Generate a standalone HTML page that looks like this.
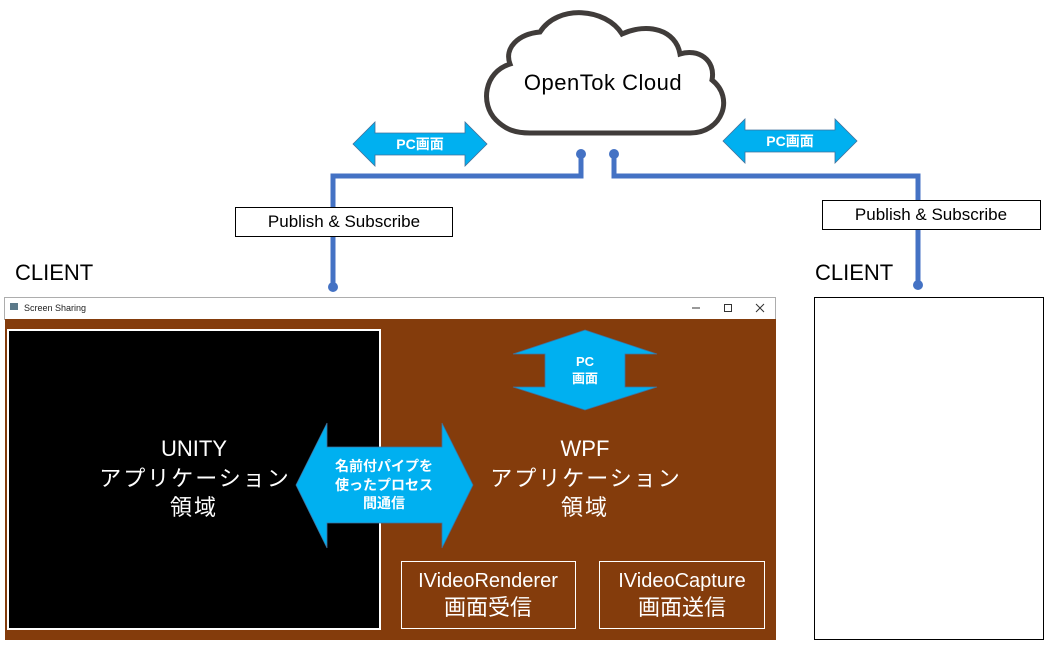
<!DOCTYPE html>
<html><head><meta charset="utf-8"><style>
html,body{margin:0;padding:0;background:#fff;width:1052px;height:645px;overflow:hidden}
text{font-family:"Liberation Sans","Noto Sans CJK JP",sans-serif}
</style></head><body>
<svg width="1052" height="645" viewBox="0 0 1052 645" xmlns="http://www.w3.org/2000/svg">
<path d="M530,133 L690,133 C722,133 735,98 712,80 C716,60 698,48 680,54 C676,30 648,22 622,34 C606,8 558,4 540,32 C518,34 504,48 510,64 C484,72 480,104 496,120 C506,130 516,133 530,133 Z" fill="#fff" stroke="#403c3a" stroke-width="5"/>
<text x="603" y="90" font-size="22" text-anchor="middle" fill="#000" letter-spacing="0.5">OpenTok Cloud</text>
<polygon points="353,144 375,122 375,133 465,133 465,122 487,144 465,166 465,155 375,155 375,166" fill="#00b0f0" stroke="#41719c" stroke-width="0.8"/>
<text x="420" y="149" font-size="14" font-weight="bold" fill="#fff" text-anchor="middle">PC画面</text>
<polygon points="723,141 745,119 745,130 835,130 835,119 857,141 835,163 835,152 745,152 745,163" fill="#00b0f0" stroke="#41719c" stroke-width="0.8"/>
<text x="790" y="146" font-size="14" font-weight="bold" fill="#fff" text-anchor="middle">PC画面</text>
<g stroke="#4472c4" stroke-width="5" fill="none">
<polyline points="581,155 581,176 333,176 333,287"/>
<polyline points="614,155 614,176 918,176 918,285"/>
</g>
<g fill="#4472c4">
<circle cx="581" cy="154" r="5"/><circle cx="614" cy="154" r="5"/>
<circle cx="333" cy="287" r="5"/><circle cx="918" cy="285" r="5"/>
</g>
<rect x="235.5" y="207.5" width="217" height="29" fill="#fff" stroke="#000"/>
<text x="344" y="227" font-size="17" text-anchor="middle">Publish &amp; Subscribe</text>
<rect x="822.5" y="200.5" width="218" height="29" fill="#fff" stroke="#000"/>
<text x="931" y="220" font-size="17" text-anchor="middle">Publish &amp; Subscribe</text>
<text x="15" y="280" font-size="22">CLIENT</text>
<text x="815" y="280" font-size="22">CLIENT</text>
<rect x="4.5" y="297.5" width="771" height="22" fill="#fff" stroke="#999" stroke-width="0.8"/>
<rect x="10" y="303" width="8" height="7" fill="#5c7a8a"/>
<text x="24" y="311" font-size="9" fill="#222">Screen Sharing</text>
<line x1="692" y1="308" x2="700" y2="308" stroke="#333"/>
<rect x="724.5" y="304.5" width="7" height="7" fill="none" stroke="#333"/>
<path d="M756,304 L764,312 M764,304 L756,312" stroke="#333"/>
<rect x="5" y="319" width="771" height="321" fill="#843c0c"/>
<rect x="8" y="330" width="372" height="299" fill="#000" stroke="#fff" stroke-width="2"/>
<g font-size="22" fill="#fff" text-anchor="middle">
<text x="194" y="456">UNITY</text>
<text x="195" y="486" letter-spacing="2">アプリケーション</text>
<text x="194" y="515" letter-spacing="2">領域</text>
<text x="585" y="456">WPF</text>
<text x="586" y="486" letter-spacing="2">アプリケーション</text>
<text x="585" y="515" letter-spacing="2">領域</text>
</g>
<polygon points="296,485 327,423 327,447 442,447 442,423 473,485 442,548 442,523 327,523 327,548" fill="#00b0f0" stroke="#41719c" stroke-width="0.8"/>
<g font-size="14" font-weight="bold" fill="#fff" text-anchor="middle">
<text x="384" y="471">名前付パイプを</text>
<text x="384" y="490">使ったプロセス</text>
<text x="384" y="508">間通信</text>
</g>
<polygon points="585,330 657,354 625,354 625,387 657,387 585,410 513,387 545,387 545,354 513,354" fill="#00b0f0" stroke="#41719c" stroke-width="0.8"/>
<text x="585" y="366" font-size="13" font-weight="bold" fill="#fff" text-anchor="middle">PC</text>
<text x="585" y="383" font-size="13" font-weight="bold" fill="#fff" text-anchor="middle">画面</text>
<rect x="401.5" y="561.5" width="174" height="67" fill="none" stroke="#fff"/>
<text x="488" y="587" font-size="20" fill="#fff" text-anchor="middle">IVideoRenderer</text>
<text x="488" y="615" font-size="22" fill="#fff" text-anchor="middle">画面受信</text>
<rect x="599.5" y="561.5" width="165" height="67" fill="none" stroke="#fff"/>
<text x="682" y="587" font-size="20" fill="#fff" text-anchor="middle">IVideoCapture</text>
<text x="682" y="615" font-size="22" fill="#fff" text-anchor="middle">画面送信</text>
<rect x="814.5" y="297.5" width="229" height="342" fill="#fff" stroke="#000"/>
</svg>
</body></html>
